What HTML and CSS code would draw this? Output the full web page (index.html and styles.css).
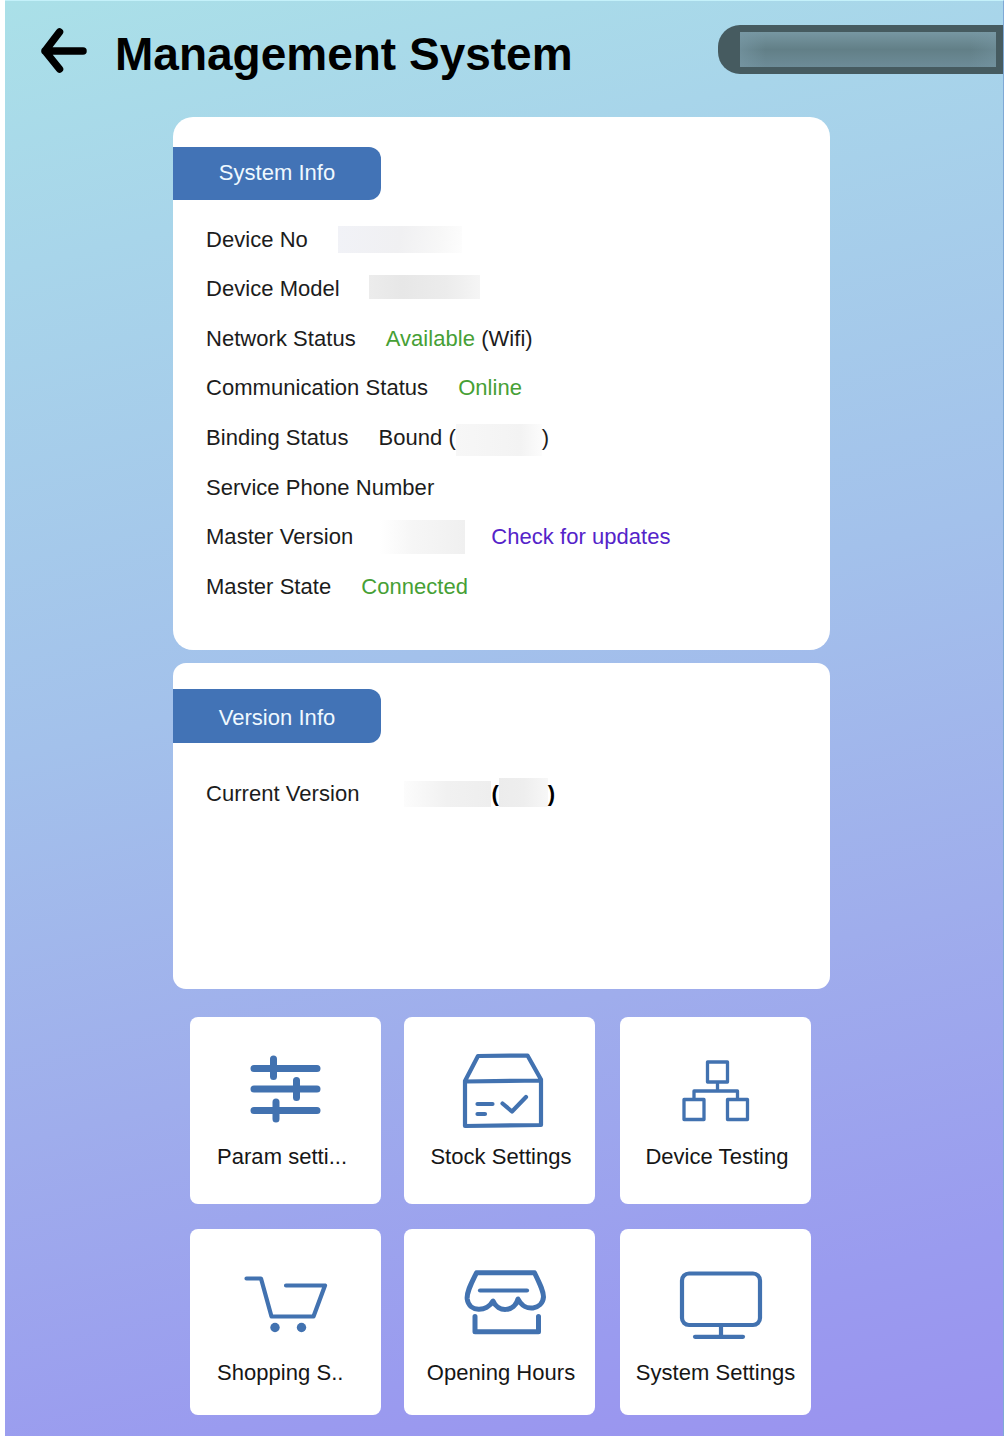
FILE: index.html
```html
<!DOCTYPE html>
<html lang="en">
<head>
<meta charset="utf-8">
<title>Management System</title>
<link rel="stylesheet" href="styles.css">
</head>
<body>
<div class="screen">
  <header class="topbar">
    <svg class="back" width="48" height="48" viewBox="0 0 48 48"><path d="M19.500 6L5 25L19.500 43M5 25H43" /></svg>
    <h1 class="title">Management System</h1>
    <div class="pill"><div class="pill-mask"></div></div>
  </header>

  <main class="content">
    <section class="card card-system">
      <h2 class="tag">System Info</h2>
      <div class="rows">
        <div class="row"><span>Device No</span><span class="mask mask-no"></span></div>
        <div class="row"><span>Device Model</span><span class="mask mask-model"></span></div>
        <div class="row"><span>Network Status</span><span><span class="ok">Available</span> (Wifi)</span></div>
        <div class="row"><span>Communication Status</span><span class="ok">Online</span></div>
        <div class="row"><span>Binding Status</span><span class="bound">Bound (<span class="mask mask-bound"></span>)</span></div>
        <div class="row"><span>Service Phone Number</span></div>
        <div class="row"><span>Master Version</span><span class="mask mask-master"></span><a class="update">Check for updates</a></div>
        <div class="row"><span>Master State</span><span class="ok">Connected</span></div>
      </div>
    </section>

    <section class="card card-version">
      <h2 class="tag">Version Info</h2>
      <div class="row row-version"><span>Current Version</span><span class="version"><span class="mask mask-ver"></span>(<span class="mask mask-build"></span>)</span></div>
    </section>

    <nav class="tiles">
      <a class="tile">
        <svg class="icon" width="191" height="120" viewBox="0 0 191 120"><path class="w7" d="M64 51.500H127M64 72H127M64 93.500H127M83.500 42V59.500M106.500 63.500V80.500M86 85V102"/></svg>
        <span class="label label-cut">Param setti...</span>
      </a>
      <a class="tile">
        <svg class="icon" width="191" height="120" viewBox="0 0 191 120"><path class="w4" d="M61 64L74 39L123.500 38.500L137 62.500V108L61 109ZM61 64.500L137 63.500"/><path class="w4 round" d="M73.500 87H88.500M73.500 97H81M98.500 86.500L108 94.500L122 80"/></svg>
        <span class="label">Stock Settings</span>
      </a>
      <a class="tile">
        <svg class="icon" width="191" height="120" viewBox="0 0 191 120"><path class="w3" d="M87.500 45H107.500V65H87.500ZM64 82.500H84V102.500H64ZM107.500 82.500H127.500V102.500H107.500ZM97.500 65V74M74 82V74H117.500V82"/></svg>
        <span class="label">Device Testing</span>
      </a>
      <a class="tile tile-low">
        <svg class="icon" width="191" height="120" viewBox="0 0 191 120"><path class="w4 round" d="M56.500 50.500H71L81.500 88.500H123.500L135 57.500H96"/><circle class="dot" cx="85" cy="99.500" r="4.700"/><circle class="dot" cx="111.500" cy="99.500" r="4.700"/></svg>
        <span class="label label-cut">Shopping S..</span>
      </a>
      <a class="tile tile-low">
        <svg class="icon" width="191" height="120" viewBox="0 0 191 120"><path class="w5" d="M72.500 44.800H130.500C136 56 139.500 63 139.500 69C138.500 81.500 121 85 114 71C110.500 84 94 85 89 73C83 84 65 84.500 63.200 71C62.500 64 67 56 72.500 44.800Z"/><path class="w4 round" d="M76 62.500H123"/><path class="w5 round" d="M71 88.500V103.700H134.500V88.500"/></svg>
        <span class="label">Opening Hours</span>
      </a>
      <a class="tile tile-low">
        <svg class="icon" width="191" height="120" viewBox="0 0 191 120"><rect class="w4" x="62" y="45.500" width="78" height="51.500" rx="7"/><path class="w4 round" d="M75 108.800H123"/><path class="w4" d="M101 97V108"/></svg>
        <span class="label label-wide">System Settings</span>
      </a>
    </nav>
  </main>
</div>
</body>
</html>
```
FILE: styles.css
```css
* { box-sizing: border-box; }
body {
  margin: 0;
  background: #fff;
  font-family: "Liberation Sans", Arial, sans-serif;
  font-size: 22px;
  letter-spacing: 0.04px;
  color: #1c1c1c;
}
.screen {
  width: 999px;
  height: 1436px;
  margin-left: 5px;
  border-top: 1px solid #c4f1fa;
  border-right: 1px solid #7fa9d6;
  background: linear-gradient(166deg, #aae0e8 0%, #a8d5ea 16%, #a3c1eb 45%, #9fadec 68%, #9a9bef 88%, #9a92ef 100%);
  overflow: hidden;
}
.topbar {
  display: flex;
  height: 116px;
  padding-left: 34px;
}
.back {
  flex: none;
  margin: 25px 0 0 1px;
  fill: none;
  stroke: #000;
  stroke-width: 7.500;
  stroke-linecap: round;
  stroke-linejoin: round;
}
.title {
  margin: 25px 0 0 27px;
  font-size: 46px;
  line-height: 56px;
  letter-spacing: 0;
  color: #000;
  white-space: nowrap;
}
.pill {
  width: 285px;
  height: 49px;
  margin: 24px 0 0 auto;
  padding: 7px 7px 7px 22px;
  border-radius: 22px 0 0 22px;
  background: #465b60;
}
.pill-mask {
  height: 35px;
  background:
    linear-gradient(90deg, rgba(120,152,165,.6), transparent 10%, transparent 90%, rgba(120,152,165,.4)),
    linear-gradient(#7797a2, #627f87 50%, #6d8c98);
}
.content {
  width: 657px;
  margin-left: 168px;
}
.card {
  background: #fff;
  overflow: hidden;
}
.card-system {
  height: 533px;
  padding-top: 30px;
  border-radius: 20px;
}
.card-version {
  height: 326px;
  margin-top: 13px;
  padding-top: 26px;
  border-radius: 13px;
}
.tag {
  width: 208px;
  height: 53px;
  margin: 0;
  border-radius: 0 12px 12px 0;
  background: #4273b6;
  color: #eff9ff;
  font-size: 22px;
  font-weight: 400;
  line-height: 52px;
  text-align: center;
}
.card-version .tag { height: 54px; line-height: 57px; }
.rows { padding-top: 15px; }
.row {
  display: flex;
  align-items: center;
  gap: 30px;
  height: 49.57px;
  padding-left: 33px;
  white-space: nowrap;
}
.row-version {
  margin-top: 26px;
  gap: 45px;
}
.ok { color: #46a035; }
.update { margin-left: -4px; color: #5423c9; }
.bound, .version { display: flex; align-items: center; }
.version { color: #000; font-weight: 700; }
.mask { flex: none; }
.mask-no {
  width: 124px;
  height: 27px;
  background: linear-gradient(100deg, #f1f2f7, #f0f0f2 50%, #f7f7f7 80%, #fdfdfd);
}
.mask-model {
  width: 111px;
  height: 24px;
  margin: -4px 0 0 -1px;
  background: linear-gradient(90deg, #ececec, #e7e7e7 30%, #ececec 70%, #f5f5f5);
}
.mask-bound {
  width: 86px;
  height: 32px;
  margin-top: 3px;
  background: linear-gradient(90deg, #f7f7f7, #f3f3f3 75%, #fcfcfc);
}
.mask-master {
  width: 86px;
  height: 34px;
  margin-left: -4px;
  background: linear-gradient(90deg, #fff, #f6f6f6 40%, #f0f0f0);
}
.mask-ver {
  width: 87px;
  height: 26px;
  background: linear-gradient(90deg, #fcfcfc, #f1f1f1 50%, #eee);
}
.mask-build {
  width: 49px;
  height: 29px;
  margin-top: -2px;
  background: linear-gradient(90deg, #ececec, #eee 50%, #f7f7f7);
}
.tiles {
  display: grid;
  grid-template-columns: 214px 216px 191px;
  row-gap: 25px;
  padding: 28px 0 0 17px;
}
.tile {
  display: flex;
  flex-direction: column;
  width: 191px;
  height: 186.500px;
  border-radius: 8px;
  background: #fff;
}
.icon {
  flex: none;
  fill: none;
  stroke: #4272b0;
}
.label {
  margin-top: 7px;
  padding-left: 3px;
  line-height: 26px;
  text-align: center;
  white-space: nowrap;
  color: #161616;
}
.tile-low .icon { margin-top: -1px; }
.tile-low .label { margin-top: 12px; }
.tile .label-cut { padding-left: 27px; text-align: left; }
.tile .label-wide { padding-left: 0; }
.w3 { stroke-width: 3.300; stroke-linejoin: round; }
.w4 { stroke-width: 4.200; stroke-linejoin: round; }
.w5 { stroke-width: 5; stroke-linejoin: round; }
.w7 { stroke-width: 7; stroke-linecap: round; }
.round { stroke-linecap: round; }
.dot { fill: #4272b0; stroke: none; }
```
